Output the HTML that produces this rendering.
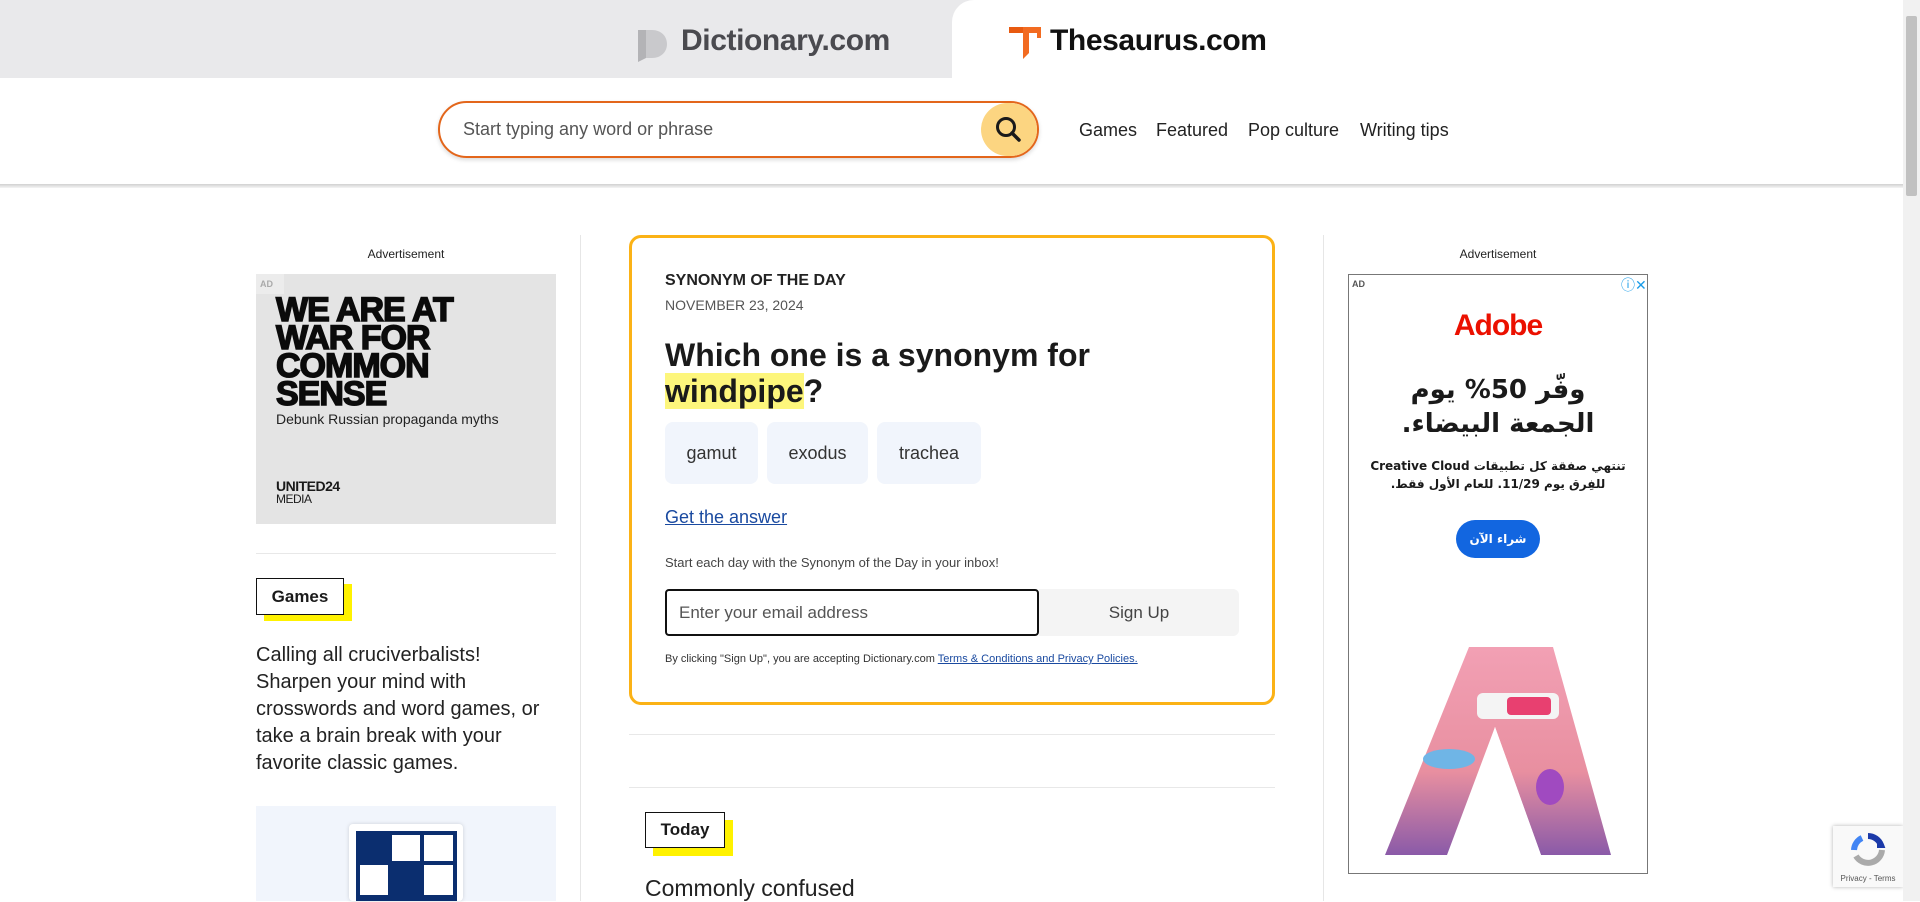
<!DOCTYPE html>
<html><head><meta charset="utf-8"><style>
*{box-sizing:border-box;margin:0;padding:0}
body{width:1920px;height:901px;overflow:hidden;background:#fff;font-family:"Liberation Sans",sans-serif;color:#1a1a1a;position:relative}
.a{position:absolute}
.sb{left:1903px;top:0;width:17px;height:901px;background:#f1f1f1}
.th{left:1906px;top:16px;width:11px;height:180px;background:#c1c1c1;border-radius:2px}
.tag{border:1.5px solid #111;background:#fff;font-weight:bold;font-size:17px;display:flex;align-items:center;justify-content:center}
.ys{background:#fff200}
.chip{top:422px;height:62px;background:#f1f5fc;border-radius:8px;font-size:18px;color:#333;display:flex;align-items:center;justify-content:center}
.nv{top:120px;font-size:18px;color:#222;white-space:nowrap}
</style></head><body>
<div class="a" style="left:0;top:0;width:1903px;height:78px;background:#e9e9eb"></div>
<div class="a" style="left:952px;top:0;width:951px;height:78px;background:#fff;border-top-left-radius:22px"></div>
<svg class="a" style="left:636px;top:26px" width="34" height="36" viewBox="0 0 34 36"><path d="M2 4h14c9 0 15 6 15 14s-6 14-15 14H10V9H2z" fill="#c9c9cc"/><path d="M2 4h8v28l-8 4z" fill="#b3b3b6"/></svg>
<div class="a" style="left:681px;top:24px;font-size:30px;font-weight:bold;color:#4a4a4f;letter-spacing:-0.4px">Dictionary.com</div>
<svg class="a" style="left:1009px;top:25px" width="34" height="36" viewBox="0 0 34 36"><path d="M0 2h32v11h-4V8H20v20l-6 6V8H0z" fill="#f26b21"/><path d="M0 2h14v6H0z" fill="#e85a10"/></svg>
<div class="a" style="left:1050px;top:24px;font-size:30px;font-weight:bold;color:#111;letter-spacing:-0.4px">Thesaurus.com</div>
<div class="a" style="left:0;top:184px;width:1903px;height:4px;background:linear-gradient(#d0d0d0,#f4f4f4)"></div>
<div class="a" style="left:438px;top:101px;width:601px;height:57px;border:2px solid #e3661b;border-radius:29px;box-shadow:0 2px 4px rgba(0,0,0,.15)"></div>
<div class="a" style="left:463px;top:119px;font-size:18px;color:#555">Start typing any word or phrase</div>
<div class="a" style="left:981px;top:103px;width:56px;height:53px;border-radius:28px;background:#fcd581"></div>
<svg class="a" style="left:994px;top:115px" width="30" height="30" viewBox="0 0 30 30"><circle cx="12" cy="12" r="8.5" fill="none" stroke="#1a1a1a" stroke-width="3"/><path d="M18 18l7 7" stroke="#1a1a1a" stroke-width="3.5" stroke-linecap="round"/></svg>
<div class="a nv" style="left:1079px">Games</div>
<div class="a nv" style="left:1156px">Featured</div>
<div class="a nv" style="left:1248px">Pop culture</div>
<div class="a nv" style="left:1360px">Writing tips</div>
<div class="a" style="left:580px;top:235px;width:1px;height:666px;background:#e6e6e6"></div>
<div class="a" style="left:1323px;top:235px;width:1px;height:666px;background:#e6e6e6"></div>
<div class="a" style="left:256px;top:247px;width:300px;text-align:center;font-size:12px;color:#222">Advertisement</div>
<div class="a" style="left:256px;top:274px;width:300px;height:250px;background:#e4e4e4">
 <div class="a" style="left:0;top:0;width:28px;height:20px;background:#ececec;font-size:9px;color:#aaa;padding:5px 4px;font-weight:bold">AD</div>
 <div class="a" style="left:20px;top:22px;font-size:34px;line-height:28px;font-weight:900;letter-spacing:-1px;color:#0b0b0b;-webkit-text-stroke:1.5px #0b0b0b">WE ARE AT<br>WAR FOR<br>COMMON<br>SENSE</div>
 <div class="a" style="left:20px;top:137px;font-size:14px;color:#222">Debunk Russian propaganda myths</div>
 <div class="a" style="left:20px;top:206px;font-size:14px;font-weight:900;letter-spacing:-.5px;line-height:12px">UNITED24<br><span style="font-weight:normal;font-size:12px">MEDIA</span></div>
</div>
<div class="a" style="left:256px;top:553px;width:300px;height:1px;background:#e8e8e8"></div>
<div class="a ys" style="left:264px;top:584px;width:88px;height:37px"></div>
<div class="a tag" style="left:256px;top:578px;width:88px;height:37px">Games</div>
<div class="a" style="left:256px;top:642px;width:300px;font-size:20px;line-height:27px;color:#222">Calling all cruciverbalists! Sharpen your mind with crosswords and word games, or take a brain break with your favorite classic games.</div>
<div class="a" style="left:256px;top:806px;width:300px;height:95px;background:#f1f5fc"></div>
<div class="a" style="left:349px;top:824px;width:114px;height:77px;background:#fff;border-radius:4px;box-shadow:0 0 4px rgba(0,0,0,.15)"></div>
<svg class="a" style="left:356px;top:831px" width="101" height="70" viewBox="0 0 101 70"><rect width="101" height="70" fill="#0b2e6f"/><rect x="36" y="4" width="28" height="26" fill="#fff"/><rect x="68" y="4" width="29" height="26" fill="#fff"/><rect x="4" y="34" width="28" height="30" fill="#fff"/><rect x="68" y="34" width="29" height="30" fill="#fff"/></svg>
<div class="a" style="left:629px;top:235px;width:646px;height:470px;border:3px solid #fbb216;border-radius:12px"></div>
<div class="a" style="left:665px;top:272px;font-size:16px;font-weight:bold;color:#222">SYNONYM OF THE DAY</div>
<div class="a" style="left:665px;top:297px;font-size:14px;color:#555">NOVEMBER 23, 2024</div>
<div class="a" style="left:665px;top:337px;font-size:32px;line-height:36px;font-weight:bold;color:#1a1a1a">Which one is a synonym for<br><span style="background:#fdf67c">windpipe</span>?</div>
<div class="a chip" style="left:665px;width:93px">gamut</div>
<div class="a chip" style="left:767px;width:101px">exodus</div>
<div class="a chip" style="left:877px;width:104px">trachea</div>
<div class="a" style="left:665px;top:507px;font-size:18px;color:#1a4aa0;text-decoration:underline">Get the answer</div>
<div class="a" style="left:665px;top:555px;font-size:13px;color:#444">Start each day with the Synonym of the Day in your inbox!</div>
<div class="a" style="left:665px;top:589px;width:374px;height:47px;border:2px solid #111;border-radius:4px;font-size:17px;color:#555;padding:12px 12px">Enter your email address</div>
<div class="a" style="left:1039px;top:589px;width:200px;height:47px;background:#f4f4f4;border-radius:0 6px 6px 0;font-size:17px;color:#444;display:flex;align-items:center;justify-content:center">Sign Up</div>
<div class="a" style="left:665px;top:653px;font-size:11px;color:#333;white-space:nowrap">By clicking "Sign Up", you are accepting Dictionary.com <span style="color:#1a4aa0;text-decoration:underline">Terms &amp; Conditions and Privacy Policies.</span></div>
<div class="a" style="left:629px;top:734px;width:646px;height:1px;background:#e8e8e8"></div>
<div class="a" style="left:629px;top:787px;width:646px;height:1px;background:#e8e8e8"></div>
<div class="a ys" style="left:653px;top:820px;width:80px;height:36px"></div>
<div class="a tag" style="left:645px;top:812px;width:80px;height:36px">Today</div>
<div class="a" style="left:645px;top:875px;font-size:23px;color:#222">Commonly confused</div>
<div class="a" style="left:1348px;top:247px;width:300px;text-align:center;font-size:12px;color:#222">Advertisement</div>
<div class="a" style="left:1348px;top:274px;width:300px;height:600px;border:1px solid #777;background:#fff">
 <div class="a" style="left:3px;top:4px;font-size:9px;color:#555;font-weight:bold">AD</div>
 <div class="a" style="left:272px;top:0;font-size:14px;color:#1a9ce8">ⓘ✕</div>
 <div class="a" style="left:0;top:34px;width:298px;text-align:center;font-size:30px;font-weight:900;color:#eb1000;letter-spacing:-1px">Adobe</div>
 <div class="a" style="left:0;top:98px;width:298px;text-align:center;font-size:26px;line-height:34px;font-weight:bold;font-family:'DejaVu Sans',sans-serif" dir="rtl">وفّر 50% يوم<br>الجمعة البيضاء.</div>
 <div class="a" style="left:0;top:182px;width:298px;text-align:center;font-size:12px;line-height:18px;font-weight:bold;font-family:'DejaVu Sans',sans-serif" dir="rtl">تنتهي صفقة كل تطبيقات Creative Cloud<br>للفِرق يوم 11/29. للعام الأول فقط.</div>
 <div class="a" style="left:107px;top:245px;width:84px;height:38px;border-radius:19px;background:#1266e0;color:#fff;font-size:12px;font-weight:bold;display:flex;align-items:center;justify-content:center;font-family:'DejaVu Sans',sans-serif">شراء الآن</div>
 <svg class="a" style="left:36px;top:372px" width="226" height="208" viewBox="0 0 226 208"><defs><linearGradient id="g" x1="0" y1="0" x2="0" y2="1"><stop offset="0" stop-color="#f2a0b4"/><stop offset=".6" stop-color="#e88fa0"/><stop offset="1" stop-color="#8a5aa8"/></linearGradient></defs><path d="M84 0h84l58 208h-70L110 80 70 208H0z" fill="url(#g)"/><path d="M110 80l46 128H62z" fill="#fff"/><rect x="92" y="46" width="82" height="26" rx="6" fill="#f4f4f4"/><rect x="122" y="50" width="44" height="18" rx="4" fill="#e84070"/><ellipse cx="64" cy="112" rx="26" ry="10" fill="#6fb5e6"/><ellipse cx="165" cy="140" rx="14" ry="18" fill="#a04ac0"/></svg>
</div>
<div class="a" style="left:1833px;top:826px;width:70px;height:61px;background:#f9f9f9;box-shadow:0 0 4px rgba(0,0,0,.3)">
 <svg class="a" style="left:17px;top:6px" width="36" height="36" viewBox="0 0 36 36"><path d="M18 4a14 14 0 0 1 13 9l-4 0" fill="none" stroke="#1c3aa9" stroke-width="6"/><path d="M4 18a14 14 0 0 1 8-12" fill="none" stroke="#4285f4" stroke-width="6"/><path d="M32 18a14 14 0 0 1-26 6" fill="none" stroke="#aaa" stroke-width="6"/></svg>
 <div class="a" style="left:0;top:48px;width:70px;text-align:center;font-size:8px;color:#555">Privacy - Terms</div>
</div>
<div class="a sb"></div><div class="a th"></div>
</body></html>
